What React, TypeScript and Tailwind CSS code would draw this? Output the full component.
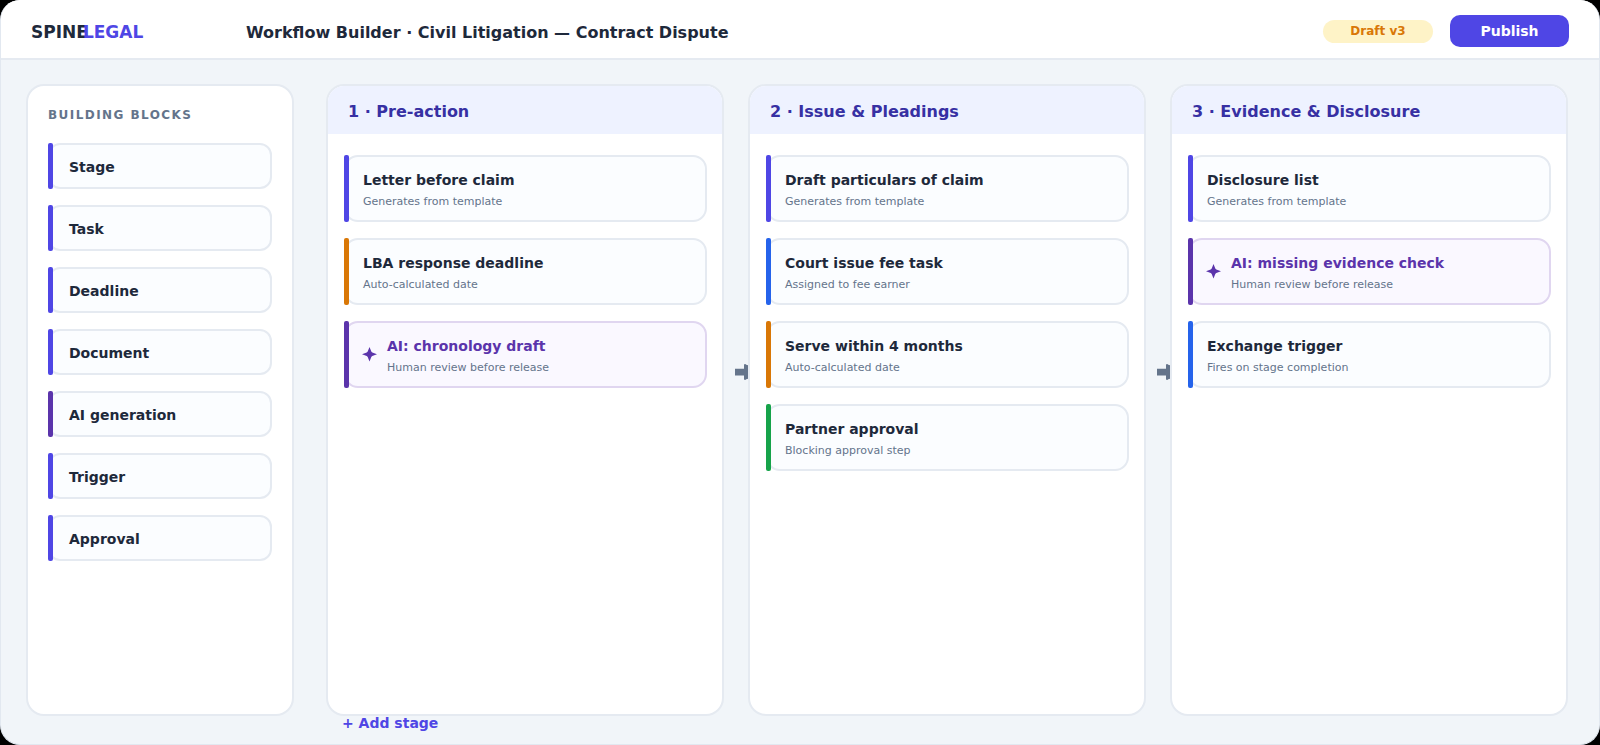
import React from 'react';
import clsx from 'clsx';

type Kind = 'default' | 'deadline' | 'task' | 'approval' | 'ai';

interface Step {
  title: string;
  note: string;
  kind: Kind;
}

interface Stage {
  name: string;
  steps: Step[];
}

const stripeColors: Record<Kind, string> = {
  default: 'bg-[#4f46e5]',
  deadline: 'bg-[#d97706]',
  task: 'bg-[#2563eb]',
  approval: 'bg-[#16a34a]',
  ai: 'bg-[#5b34ab]',
};

const blocks: { label: string; kind: Kind }[] = [
  { label: 'Stage', kind: 'default' },
  { label: 'Task', kind: 'default' },
  { label: 'Deadline', kind: 'default' },
  { label: 'Document', kind: 'default' },
  { label: 'AI generation', kind: 'ai' },
  { label: 'Trigger', kind: 'default' },
  { label: 'Approval', kind: 'default' },
];

const stages: Stage[] = [
  {
    name: '1 · Pre-action',
    steps: [
      { title: 'Letter before claim', note: 'Generates from template', kind: 'default' },
      { title: 'LBA response deadline', note: 'Auto-calculated date', kind: 'deadline' },
      { title: 'AI: chronology draft', note: 'Human review before release', kind: 'ai' },
    ],
  },
  {
    name: '2 · Issue & Pleadings',
    steps: [
      { title: 'Draft particulars of claim', note: 'Generates from template', kind: 'default' },
      { title: 'Court issue fee task', note: 'Assigned to fee earner', kind: 'task' },
      { title: 'Serve within 4 months', note: 'Auto-calculated date', kind: 'deadline' },
      { title: 'Partner approval', note: 'Blocking approval step', kind: 'approval' },
    ],
  },
  {
    name: '3 · Evidence & Disclosure',
    steps: [
      { title: 'Disclosure list', note: 'Generates from template', kind: 'default' },
      { title: 'AI: missing evidence check', note: 'Human review before release', kind: 'ai' },
      { title: 'Exchange trigger', note: 'Fires on stage completion', kind: 'task' },
    ],
  },
];

const Stripe: React.FC<{ kind: Kind }> = ({ kind }) => (
  <span className={clsx('absolute -inset-y-[2px] -left-[2px] w-[5px] rounded-[2px]', stripeColors[kind])} />
);

const Sparkle = () => (
  <svg viewBox="0 0 16 16" className="size-4 shrink-0" fill="#5b34ab" aria-hidden="true">
    <path d="M7.5 0L9.3 4.6Q9.6 5.3 10.3 5.6L15 7.3L10.3 9Q9.6 9.3 9.3 10L7.5 14.6L5.7 10Q5.4 9.3 4.7 9L0 7.3L4.7 5.6Q5.4 5.3 5.7 4.6Z" />
  </svg>
);

const Connector = () => (
  <div className="flex w-6 shrink-0 items-center justify-end pb-[56px]">
    <svg viewBox="0 0 13 16" className="h-4 w-[13px]" fill="#64748b" aria-hidden="true">
      <path d="M0 4.8H9V.8Q9.1 0 10.2 0Q11 1 13 1.2V14.8Q11 15 10.2 16Q9.1 16 9 15.2V11.6H0Z" />
    </svg>
  </div>
);

const StepCard: React.FC<{ step: Step }> = ({ step }) => {
  const isAi = step.kind === 'ai';
  return (
    <li
      className={clsx(
        'relative flex h-[67px] items-center gap-[9px] rounded-[14px] border-2',
        isAi ? 'border-[#e0d6f0] bg-[#faf8ff] pl-4' : 'border-[#e5eaf1] bg-[#fbfdff] pl-[17px]'
      )}
    >
      <Stripe kind={step.kind} />
      {isAi && <Sparkle />}
      <div className="pt-1">
        <h3 className={clsx('text-[14px] leading-[22px] font-bold', isAi ? 'text-[#5b34ab]' : 'text-[#1e293b]')}>
          {step.title}
        </h3>
        <p className="text-[11px] leading-[22px] text-[#64748b]">{step.note}</p>
      </div>
    </li>
  );
};

const StageColumn: React.FC<{ stage: Stage }> = ({ stage }) => (
  <section className="min-w-0 flex-1 overflow-hidden rounded-[18px] border-2 border-[#e5eaf1] bg-white">
    <h2 className="h-12 bg-[#eef2ff] pl-5 text-[16px] leading-[52px] font-bold text-[#3730a3]">{stage.name}</h2>
    <ul className="flex flex-col gap-4 py-[21px] pr-[15px] pl-4">
      {stage.steps.map(step => (
        <StepCard key={step.title} step={step} />
      ))}
    </ul>
  </section>
);

const App = () => {
  return (
    <div className="bg-black font-['DejaVu_Sans',sans-serif] text-[#1e293b]">
      <div className="flex min-h-screen flex-col overflow-hidden rounded-[20px] border-x border-b border-[#e2e8f0] bg-[#f1f5f9]">
        <header className="flex h-[60px] items-center border-b-2 border-[#e5eaf1] bg-white px-[30px] pt-1">
          <div className="w-[215px] pt-1 text-[17px] font-bold">
            SPINE<span className="-ml-[5px] text-[#4f46e5]">LEGAL</span>
          </div>
          <h1 className="pt-1 text-[16px] font-bold">Workflow Builder · Civil Litigation — Contract Dispute</h1>
          <div className="ml-auto flex items-center gap-[17px]">
            <span className="w-[110px] rounded-full bg-[#fef3c7] text-center text-[12px] leading-[23px] font-bold text-[#d97706]">
              Draft v3
            </span>
            <button type="button" className="h-8 w-[119px] rounded-[10px] bg-[#4f46e5] text-[14px] font-bold text-white">
              Publish
            </button>
          </div>
        </header>

        <main className="flex flex-1 pt-6 pr-[31px] pl-[25px]">
          <aside className="mr-8 w-[268px] shrink-0 rounded-[18px] border-2 border-[#e5eaf1] bg-white px-5 pt-[17px]">
            <h2 className="text-[12px] leading-6 font-bold tracking-[0.12em] text-[#64748b]">BUILDING BLOCKS</h2>
            <ul className="mt-4 flex flex-col gap-4">
              {blocks.map(block => (
                <li
                  key={block.label}
                  className="relative h-[46px] rounded-[12px] border-2 border-[#e5eaf1] bg-[#fbfdff] pl-[19px] text-[14px] leading-[44px] font-bold"
                >
                  <Stripe kind={block.kind} />
                  {block.label}
                </li>
              ))}
            </ul>
          </aside>
          {stages.map((stage, i) => (
            <React.Fragment key={stage.name}>
              {i > 0 && <Connector />}
              <StageColumn stage={stage} />
            </React.Fragment>
          ))}
        </main>

        <footer className="h-7 pl-[341px]">
          <button type="button" className="block text-[14px] leading-[14px] font-bold text-[#4f46e5]">
            + Add stage
          </button>
        </footer>
      </div>
    </div>
  );
};

export default App;
